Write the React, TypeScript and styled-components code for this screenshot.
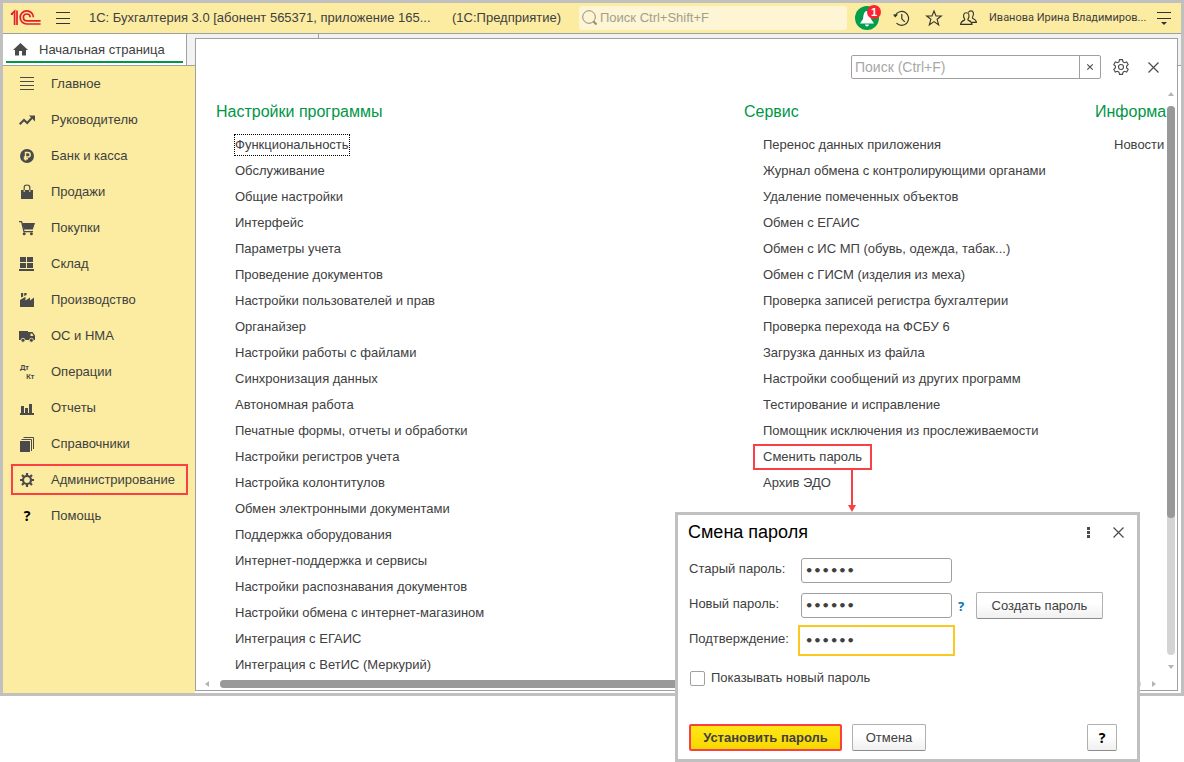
import React from "react";
import styled, { createGlobalStyle, css } from "styled-components";

const Global = createGlobalStyle`
  *, *::before, *::after { box-sizing: border-box; }
  body { margin: 0; background: #fff; color: #404040; font: 13px/16px "Liberation Sans", Arial, sans-serif; }
  button, input { font: inherit; color: inherit; }
  ul { list-style: none; margin: 0; padding: 0; }
  a { color: inherit; text-decoration: none; }
  svg { display: block; flex: none; overflow: visible; }
`;

const Stage = styled.div`
  position: relative;
  padding-bottom: 66px;
`;

const AppWindow = styled.div`
  display: flex;
  flex-direction: column;
  border: 3px solid #c0c0c0;
`;

const TopBar = styled.header`
  display: flex;
  align-items: center;
  height: 31px;
  padding: 0 9px 0 8px;
  background: #fbeca1;
  border-bottom: 1px solid #a0a0a0;
`;

const IconButton = styled.button<{ $ml?: number; $size?: number }>`
  display: flex;
  align-items: center;
  justify-content: center;
  flex: none;
  width: ${(p) => p.$size ?? 16}px;
  height: ${(p) => p.$size ?? 16}px;
  margin-left: ${(p) => p.$ml ?? 0}px;
  padding: 0;
  border: 0;
  background: none;
  position: relative;
`;

const AppTitle = styled.h1`
  flex: none;
  margin: 0 0 0 18px;
  font-size: 13px;
  font-weight: 400;
  white-space: nowrap;
  width: 351px;
`;

const Platform = styled.span`
  flex: none;
  margin-left: 12px;
  width: 116px;
  white-space: nowrap;
`;

const GlobalSearch = styled.label`
  display: flex;
  align-items: center;
  flex: 1;
  gap: 2px;
  height: 24px;
  margin-left: 11px;
  padding-left: 3px;
  background: #fdf5d3;
  border-radius: 2px;
  input {
    flex: 1;
    min-width: 0;
    padding: 0;
    border: 0;
    outline: 0;
    background: none;
  }
  input::placeholder { color: #a39f8e; opacity: 1; }
`;

const Badge = styled.span`
  position: absolute;
  top: -1px;
  right: -2px;
  width: 14px;
  height: 14px;
  border-radius: 50%;
  background: #fb2430;
  color: #fff;
  font: bold 11px/14px "Liberation Sans", Arial, sans-serif;
  text-align: center;
`;

const UserName = styled.a`
  flex: none;
  width: 154px;
  margin-left: 13px;
  font: 11px/16px Roboto, "Open Sans", sans-serif;
  white-space: nowrap;
`;

const Body = styled.div`
  display: grid;
  grid-template-columns: 192px minmax(0, 1fr);
`;

const LeftColumn = styled.div`
  display: flex;
  flex-direction: column;
`;

const TabStrip = styled.div`
  display: flex;
  height: 32px;
  background: #f2f2f2;
  border-bottom: 1px solid #a0a0a0;
`;

const HomeTab = styled.a`
  display: flex;
  align-items: center;
  gap: 11px;
  position: relative;
  width: 184px;
  padding: 0 0 0 10px;
  background: #fff;
  border-right: 1px solid #a0a0a0;
  &::after {
    content: "";
    position: absolute;
    left: 3px;
    right: 3px;
    bottom: 2px;
    height: 2px;
    background: #009646;
  }
`;

const SideNav = styled.nav`
  flex: 1;
  background: #fbeca1;
`;

const NavItem = styled.li`
  padding: 2px 7px 3px 8px;
`;

const NavLink = styled.a<{ $marked?: boolean }>`
  display: flex;
  align-items: center;
  gap: 16px;
  height: 31px;
  padding-left: 6px;
  border: 2px solid ${(p) => (p.$marked ? "#fb4045" : "transparent")};
  white-space: nowrap;
`;

const Workspace = styled.div`
  display: flex;
  padding: 4px 3px 2px 0;
  background: linear-gradient(#f2f2f2 31px, #a0a0a0 31px, #a0a0a0 32px, #fff 32px);
`;

const TabDivider = styled.i`
  position: absolute;
  left: 122px;
  top: -5px;
  width: 1px;
  height: 4px;
  background: #a0a0a0;
`;

const Panel = styled.main`
  position: relative;
  display: flex;
  flex: 1;
  min-width: 0;
  flex-direction: column;
  background: #fff;
  border: 1px solid #a0a0a0;
`;

const PanelTools = styled.div`
  display: flex;
  justify-content: flex-end;
  align-items: center;
  padding: 16px 16px 11px 0;
`;

const PanelSearch = styled.form`
  display: flex;
  width: 250px;
  height: 24px;
  border: 1px solid #a0a0a0;
  border-radius: 2px;
  input {
    flex: 1;
    min-width: 0;
    padding: 0 3px;
    border: 0;
    outline: 0;
    background: none;
    font-size: 14px;
  }
  input::placeholder { color: #a8a8a8; opacity: 1; }
  button {
    display: flex;
    align-items: center;
    justify-content: center;
    width: 21px;
    padding: 0;
    border: 0;
    border-left: 1px solid #a0a0a0;
    background: none;
  }
`;

const ScrollRow = styled.div`
  display: flex;
`;

const Sections = styled.div`
  flex: 1;
  min-width: 0;
  overflow: hidden;
  display: grid;
  grid-template-columns: 528px 351px 200px;
  padding: 12px 0 0 20px;
`;

const SectionTitle = styled.h2`
  margin: 0 0 10px;
  color: #009646;
  font-size: 16px;
  line-height: 20px;
  font-weight: 400;
`;

const LinkItem = styled.li`
  display: flex;
  align-items: center;
  height: 26px;
  padding-left: 9px;
`;

const CommandLink = styled.a<{ $focused?: boolean; $marked?: boolean }>`
  position: relative;
  padding: 3px 8px;
  border: 2px solid transparent;
  white-space: nowrap;
  ${(p) => p.$marked && css`border-color: #fb4045;`}
  ${(p) => p.$focused && css`
    padding: 2px 0;
    margin-left: 9px;
    border: 1px dotted #000;
  `}
`;

const Arrow = styled.svg`
  position: absolute;
  right: 14px;
  top: 100%;
  z-index: 3;
`;

const VScroll = styled.div`
  display: flex;
  flex-direction: column;
  align-items: center;
  width: 8px;
  margin-right: 2px;
  padding: 1px 0 8px;
`;

const VTrack = styled.div`
  flex: 1;
  width: 8px;
  margin: 9px 0;
  border-radius: 4px;
  background: #d4d4d4;
  &::before {
    content: "";
    display: block;
    height: 75%;
    border-radius: 4px;
    background: #999;
  }
`;

const HScroll = styled.div`
  display: flex;
  align-items: center;
  height: 12px;
  padding: 0 20px 0 8px;
  gap: 10px;
`;

const HTrack = styled.div`
  flex: 1;
  height: 8px;
  border-radius: 4px;
  background: #d4d4d4;
  &::before {
    content: "";
    display: block;
    width: 90%;
    height: 8px;
    border-radius: 4px;
    background: #999;
  }
`;

const Dialog = styled.section`
  position: absolute;
  right: 44px;
  bottom: 0;
  width: 465px;
  padding: 6px 20px 8px 11px;
  background: #fff;
  border: 3px solid #c0c0c0;
  z-index: 2;
`;

const DialogHead = styled.div`
  display: flex;
  align-items: center;
  height: 22px;
  margin: 0 -9px 14px -1px;
  h2 { flex: 1; margin: 0; color: #000; font-size: 18px; line-height: 22px; font-weight: 400; }
`;

const FieldRow = styled.div`
  display: flex;
  align-items: center;
  height: 27px;
  margin-bottom: 8px;
  label { align-self: flex-start; width: 112px; line-height: 24px; white-space: nowrap; }
`;

const PasswordInput = styled.input`
  width: 151px;
  height: 25px;
  padding: 0 3px;
  border: 1px solid #a0a0a0;
  border-radius: 3px;
  background: #fff;
  font: bold 13px/20px "DejaVu Sans", sans-serif;
  &[data-active] {
    border-color: transparent;
    outline: 2px solid #fbc81f;
    outline-offset: 1px;
    border-radius: 0;
  }
`;

const FieldHint = styled.a`
  width: 24px;
  padding-left: 6px;
  color: #0a74b8;
  font: bold 13px/16px "Noto Sans", sans-serif;
`;

const Button = styled.button<{ $primary?: boolean; $width: number }>`
  width: ${(p) => p.$width}px;
  height: 27px;
  padding: 0;
  border: 1px solid #b0b0b0;
  border-bottom-color: #8c8c8c;
  border-radius: 2px;
  background: linear-gradient(#fff 40%, #f0f0f0);
  white-space: nowrap;
  ${(p) => p.$primary && css`
    border: 2px solid #fb4045;
    background: linear-gradient(#ffe715, #f7d800);
    font-weight: 700;
  `}
`;

const CheckRow = styled.label`
  display: flex;
  align-items: center;
  gap: 6px;
  height: 16px;
  margin: 16px 0 38px 1px;
  input {
    appearance: none;
    width: 15px;
    height: 15px;
    margin: 0;
    border: 1px solid #a0a0a0;
    border-radius: 2px;
    background: #fff;
  }
`;

const DialogFoot = styled.div`
  display: flex;
  gap: 10px;
  button:last-child { margin-left: auto; color: #000; font: bold 14px/16px "Noto Sans", sans-serif; }
`;

const ink = "#4a4a4a";

const Logo = () => (
  <svg width="30" height="16" viewBox="0 0 30 16" fill="none" stroke="#e0202a" strokeWidth="1.7">
    <path d="M0 4.6 L3.6 1.2 V15" />
    <path d="M0 4.2 H2 M6 0.4 V15" />
    <path d="M22.4 7.2 A6.6 6.6 0 1 0 15.8 14 H29.6" />
    <path d="M19.2 7.2 A3.4 3.4 0 1 0 15.8 10.8 H29.6" />
  </svg>
);

const Cross = ({ size = 11, width = 1.2 }: { size?: number; width?: number }) => (
  <svg width={size} height={size} viewBox="0 0 11 11" stroke={ink} strokeWidth={width}>
    <path d="M.5 .5 L10.5 10.5 M10.5 .5 L.5 10.5" />
  </svg>
);

const Triangle = ({ dir }: { dir: "up" | "down" | "left" | "right" }) => {
  const d = { up: "M0 5 H6 L3 1Z", down: "M0 1 H6 L3 5Z", left: "M5 0 V6 L1 3Z", right: "M1 0 V6 L5 3Z" }[dir];
  return <svg width="6" height="6" fill="#b4b4b4"><path d={d} /></svg>;
};

const icons: Record<string, React.ReactNode> = {
  main: <path d="M1 1.5H15M1 5.5H15M1 9.5H15M1 13.5H15" stroke={ink} />,
  chart: <><path d="M.7 12.2 L5 8 L8.2 11 L13 5.8" stroke={ink} strokeWidth="2" fill="none" /><path d="M10 3.5 H16 V9.5Z" /></>,
  ruble: <><circle cx="8" cy="8" r="7" /><path d="M6.5 12.5 V4.5 H9 A2.2 2.2 0 0 1 9 9 H4.8 M4.8 10.8 H9" stroke="#fbeca1" strokeWidth="1.4" fill="none" /></>,
  bag: <><path d="M2 6 H14 V15 H2Z" /><path d="M5.2 8 V3.2 Q5.2 1 8 1 Q10.8 1 10.8 3.2 V8" fill="none" stroke={ink} strokeWidth="1.2" /><path d="M5.2 6V8M10.8 6V8" stroke="#fbeca1" strokeWidth="1" /></>,
  cart: <><path d="M0 1.6 H2.6 L5 11.6 H14" fill="none" stroke={ink} strokeWidth="1.3" /><path d="M3 3 H16 L13.8 9.6 H4.8Z" /><circle cx="5.2" cy="13.8" r="1.5" /><circle cx="12.4" cy="13.8" r="1.5" /></>,
  stock: <path d="M1 1H7V6H1Z M8 1H14V6H8Z M1 7H7V12H1Z M8 7H14V12H8Z M0 13H15V15H0Z" />,
  factory: <path d="M1 15 V8 L6.5 4.8 V8.5 L11 5.5 V8.5 L15 5.5 V15Z M2 5.6 V1 H4.2 V4.5Z M5.2 4 V1 H7.6 V3Z" />,
  truck: <><path d="M0 3 H9 V12 H0Z M10 4 H13.5 L16 7.5 V12 H9 V4Z" /><path d="M11.5 5.6H13.2L14.5 8H11.5Z" fill="#fbeca1" /><circle cx="4" cy="12.3" r="2" stroke="#fbeca1" strokeWidth=".8" /><circle cx="12.4" cy="12.3" r="2" stroke="#fbeca1" strokeWidth=".8" /></>,
  dtkt: <g fontFamily="Noto Sans, sans-serif" fontWeight="700" fontSize="7"><text x="1" y="6">Дт</text><text x="7" y="15">Кт</text></g>,
  bars: <path d="M1 13H15V15H1Z M2 6H5V14H2Z M6 8H9V14H6Z M10 4H13V14H10Z" />,
  books: <><path d="M1 5H11V16H1Z" /><path d="M2.5 3.5H12.5V15 M4.5 1.5H14.5V13" fill="none" stroke={ink} /></>,
  gear: <><circle cx="8" cy="8" r="4" fill="none" stroke={ink} strokeWidth="2.2" /><path d="M8 1V4M8 12V15M1 8H4M12 8H15M3 3L5.2 5.2M10.8 10.8L13 13M13 3L10.8 5.2M5.2 10.8L3 13" stroke={ink} strokeWidth="2.2" /></>,
  help: <text x="8" y="13" textAnchor="middle" fill="#000" fontFamily="Noto Sans, sans-serif" fontWeight="700" fontSize="14">?</text>,
};

const NavIcon = ({ name }: { name: string }) => (
  <svg width="16" height="16" viewBox="0 0 16 16" fill={ink} aria-hidden="true">{icons[name]}</svg>
);

const navItems = [
  ["main", "Главное"], ["chart", "Руководителю"], ["ruble", "Банк и касса"], ["bag", "Продажи"],
  ["cart", "Покупки"], ["stock", "Склад"], ["factory", "Производство"], ["truck", "ОС и НМА"],
  ["dtkt", "Операции"], ["bars", "Отчеты"], ["books", "Справочники"], ["gear", "Администрирование"], ["help", "Помощь"],
];

const sections = [
  {
    title: "Настройки программы",
    links: [
      "Функциональность", "Обслуживание", "Общие настройки", "Интерфейс", "Параметры учета", "Проведение документов",
      "Настройки пользователей и прав", "Органайзер", "Настройки работы с файлами", "Синхронизация данных",
      "Автономная работа", "Печатные формы, отчеты и обработки", "Настройки регистров учета", "Настройка колонтитулов",
      "Обмен электронными документами", "Поддержка оборудования", "Интернет-поддержка и сервисы",
      "Настройки распознавания документов", "Настройки обмена с интернет-магазином", "Интеграция с ЕГАИС",
      "Интеграция с ВетИС (Меркурий)",
    ],
  },
  {
    title: "Сервис",
    links: [
      "Перенос данных приложения", "Журнал обмена с контролирующими органами", "Удаление помеченных объектов",
      "Обмен с ЕГАИС", "Обмен с ИС МП (обувь, одежда, табак...)", "Обмен с ГИСМ (изделия из меха)",
      "Проверка записей регистра бухгалтерии", "Проверка перехода на ФСБУ 6", "Загрузка данных из файла",
      "Настройки сообщений из других программ", "Тестирование и исправление",
      "Помощник исключения из прослеживаемости", "Сменить пароль", "Архив ЭДО",
    ],
  },
  { title: "Информация", links: ["Новости"] },
];

export default function App() {
  return (
    <Stage>
      <Global />
      <AppWindow>
        <TopBar>
          <Logo />
          <IconButton $ml={14} aria-label="Меню">
            <svg width="14" height="12" stroke="#333"><path d="M0 .5H14M0 6.5H14M0 11.5H14" /></svg>
          </IconButton>
          <AppTitle>1С: Бухгалтерия 3.0 [абонент 565371, приложение 165...</AppTitle>
          <Platform>(1С:Предприятие)</Platform>
          <GlobalSearch>
            <svg width="16" height="16" fill="none" stroke="#8f8b78"><circle cx="7" cy="7" r="6.3" /><path d="M11.5 11.5L14.5 14.5" strokeWidth="2" /></svg>
            <input aria-label="Поиск" placeholder="Поиск Ctrl+Shift+F" />
          </GlobalSearch>
          <IconButton $ml={8} $size={24} aria-label="Уведомления">
            <svg width="24" height="24"><circle cx="12" cy="12" r="12" fill="#009e4e" /><path d="M12 5C9 5 8.5 9 8 13L5 17.5H19L16 13C15.5 9 15 5 12 5ZM10 18.5H14Q13.5 20.5 12 20.5Q10.5 20.5 10 18.5Z" fill="#fff" /></svg>
            <Badge>1</Badge>
          </IconButton>
          <IconButton $ml={14} aria-label="История">
            <svg width="17" height="17" viewBox="0 0 17 17" fill="none" stroke="#333" strokeWidth="1.2"><path d="M2.3 5.5A7 7 0 1 1 3.5 13.2M8.8 4V8.8L11.8 11.8" /><path d="M0 4.6L5 4.6L2.2 7.6Z" fill="#333" stroke="none" /></svg>
          </IconButton>
          <IconButton $ml={17} aria-label="Избранное">
            <svg width="16" height="16" viewBox="0 0 16 16" fill="none" stroke="#333" strokeWidth="1.1"><path d="M8 1L10 6H15.3L11.1 9.3L12.7 15L8 11.6L3.3 15L4.9 9.3L.7 6H6Z" /></svg>
          </IconButton>
          <IconButton $ml={18} aria-label="Пользователи">
            <svg width="17" height="16" viewBox="0 0 17 16" fill="none" stroke="#333" strokeWidth="1.1"><path d="M.6 14.4C.6 11.6 2 11.2 4.4 10.2C5 9.9 4.8 9.2 4.3 8.4C3 6 3.4 2.8 6.3 2.8C9.2 2.8 9.6 6 8.3 8.4C7.8 9.2 7.6 9.9 8.2 10.2C10.6 11.2 12 11.6 12 14.4ZM8.4 2.4C9 1.3 9.9.9 10.8.9C13.7.9 14 4 12.8 6.5C12.3 7.3 12.1 8 12.7 8.3C15 9.3 16.4 9.8 16.4 12.4H12" /></svg>
          </IconButton>
          <UserName href="#">Иванова Ирина Владимиров...</UserName>
          <IconButton $ml={13} aria-label="Сервис и настройки">
            <svg width="14" height="14" stroke="#333"><path d="M0 1.5H14M0 7.5H14" /><path d="M4 11H10L7 14Z" fill="#333" stroke="none" /></svg>
          </IconButton>
        </TopBar>
        <Body>
          <LeftColumn>
            <TabStrip>
              <HomeTab href="#">
                <svg width="15" height="13" fill={ink}><path d="M7.5 0L15 7H13V12.5H9V8H6V12.5H2V7H0Z" /></svg>
                Начальная страница
              </HomeTab>
            </TabStrip>
            <SideNav>
              <ul>
                {navItems.map(([icon, label]) => (
                  <NavItem key={label}>
                    <NavLink href="#" $marked={icon === "gear"}><NavIcon name={icon} />{label}</NavLink>
                  </NavItem>
                ))}
              </ul>
            </SideNav>
          </LeftColumn>
          <Workspace>
            <Panel>
              <TabDivider />
              <PanelTools>
                <PanelSearch>
                  <input aria-label="Поиск по разделу" placeholder="Поиск (Ctrl+F)" />
                  <button type="button" aria-label="Очистить"><Cross size={6} width={2} /></button>
                </PanelSearch>
                <IconButton $ml={12} aria-label="Настройки">
                  <svg width="16" height="16" viewBox="0 0 16 16" fill="none" stroke={ink} strokeWidth="1.1"><circle cx="8" cy="8" r="2.5" /><path d="M6.5.6H9.5L10 2.8L11.6 3.7L13.7 3L15.2 5.6L13.6 7.1V8.9L15.2 10.4L13.7 13L11.6 12.3L10 13.2L9.5 15.4H6.5L6 13.2L4.4 12.3L2.3 13L.8 10.4L2.4 8.9V7.1L.8 5.6L2.3 3L4.4 3.7L6 2.8Z" /></svg>
                </IconButton>
                <IconButton $ml={16} aria-label="Закрыть раздел"><Cross /></IconButton>
              </PanelTools>
              <ScrollRow>
                <Sections>
                  {sections.map((s) => (
                    <section key={s.title}>
                      <SectionTitle>{s.title}</SectionTitle>
                      <ul>
                        {s.links.map((l) => (
                          <LinkItem key={l}>
                            <CommandLink href="#" $focused={l === "Функциональность"} $marked={l === "Сменить пароль"}>
                              {l}
                              {l === "Сменить пароль" && (
                                <Arrow width="8" height="46"><path d="M3 0H5V37H8L4 44L0 37H3Z" fill="#fb4045" /></Arrow>
                              )}
                            </CommandLink>
                          </LinkItem>
                        ))}
                      </ul>
                    </section>
                  ))}
                </Sections>
                <VScroll>
                  <Triangle dir="up" />
                  <VTrack />
                  <Triangle dir="down" />
                </VScroll>
              </ScrollRow>
              <HScroll>
                <Triangle dir="left" />
                <HTrack />
                <Triangle dir="right" />
              </HScroll>
            </Panel>
          </Workspace>
        </Body>
      </AppWindow>
      <Dialog role="dialog" aria-labelledby="dialog-title">
        <DialogHead>
          <h2 id="dialog-title">Смена пароля</h2>
          <IconButton aria-label="Ещё">
            <svg width="3" height="11" fill={ink}><path d="M0 0H3V3H0ZM0 4H3V7H0ZM0 8H3V11H0Z" /></svg>
          </IconButton>
          <IconButton $ml={14} aria-label="Закрыть"><Cross /></IconButton>
        </DialogHead>
        <FieldRow>
          <label htmlFor="old">Старый пароль:</label>
          <PasswordInput id="old" type="password" defaultValue="secret" />
        </FieldRow>
        <FieldRow>
          <label htmlFor="new">Новый пароль:</label>
          <PasswordInput id="new" type="password" defaultValue="secret" />
          <FieldHint href="#">?</FieldHint>
          <Button type="button" $width={127}>Создать пароль</Button>
        </FieldRow>
        <FieldRow>
          <label htmlFor="confirm">Подтверждение:</label>
          <PasswordInput id="confirm" type="password" defaultValue="secret" data-active />
        </FieldRow>
        <CheckRow><input type="checkbox" />Показывать новый пароль</CheckRow>
        <DialogFoot>
          <Button type="button" $primary $width={153}>Установить пароль</Button>
          <Button type="button" $width={74}>Отмена</Button>
          <Button type="button" $width={30}>?</Button>
        </DialogFoot>
      </Dialog>
    </Stage>
  );
}
